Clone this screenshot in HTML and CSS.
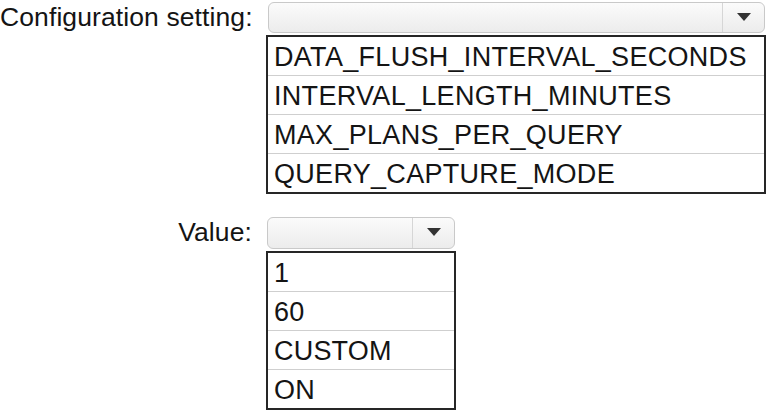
FILE: index.html
```html
<!DOCTYPE html>
<html>
<head>
<meta charset="utf-8">
<link rel="stylesheet" href="styles.css">
</head>
<body>
<div class="form">
  <div class="label">Configuration setting:</div>
  <div class="field wide">
    <div class="select"><div class="value"></div><div class="btn"><span class="tri"></span></div></div>
    <div class="list">
      <div class="item">DATA_FLUSH_INTERVAL_SECONDS</div>
      <div class="item">INTERVAL_LENGTH_MINUTES</div>
      <div class="item">MAX_PLANS_PER_QUERY</div>
      <div class="item">QUERY_CAPTURE_MODE</div>
    </div>
  </div>
  <div class="label">Value:</div>
  <div class="field narrow">
    <div class="select"><div class="value"></div><div class="btn"><span class="tri"></span></div></div>
    <div class="list">
      <div class="item">1</div>
      <div class="item">60</div>
      <div class="item">CUSTOM</div>
      <div class="item">ON</div>
    </div>
  </div>
</div>
</body>
</html>
```
FILE: styles.css
```css
html, body {
  margin: 0;
  padding: 0;
  background: #ffffff;
}
body {
  font-family: "Liberation Sans", Arial, sans-serif;
  color: #141414;
}
.form {
  display: grid;
  grid-template-columns: 252px auto;
  column-gap: 14px;
  row-gap: 23px;
  padding-top: 2px;
  align-items: start;
}
.label {
  font-size: 26.5px;
  letter-spacing: 0.1px;
  text-align: right;
  height: 31px;
  line-height: 31px;
  white-space: nowrap;
}
.field {
  display: flex;
  flex-direction: column;
  gap: 2px;
}
.wide { width: 500px; }
.narrow { width: 190px; }
.select {
  display: flex;
  height: 31px;
  margin: 0 1px 0 2px;
  border: 1px solid #c9c9c9;
  border-radius: 6px;
  background: linear-gradient(#fbfbfb, #ececec);
  box-sizing: border-box;
  overflow: hidden;
}
.narrow .select { height: 32px; margin-left: 1px; }
.value { flex: 1; }
.btn {
  width: 41px;
  border-left: 1px solid #d6d6d6;
  display: flex;
  align-items: center;
  justify-content: center;
  padding-bottom: 2px;
}
.tri {
  width: 0;
  height: 0;
  border-left: 7px solid transparent;
  border-right: 7px solid transparent;
  border-top: 8px solid #333333;
}
.list {
  border: 2px solid #262626;
  display: flex;
  flex-direction: column;
}
.item {
  height: 38px;
  box-sizing: border-box;
  padding: 3px 0 0 6px;
  line-height: 35px;
  font-size: 27px;
  letter-spacing: 0.3px;
  white-space: nowrap;
}
.item + .item {
  border-top: 1px solid #cfcfcf;
  height: 39px;
}
.narrow .item { letter-spacing: 0.2px; }
```
